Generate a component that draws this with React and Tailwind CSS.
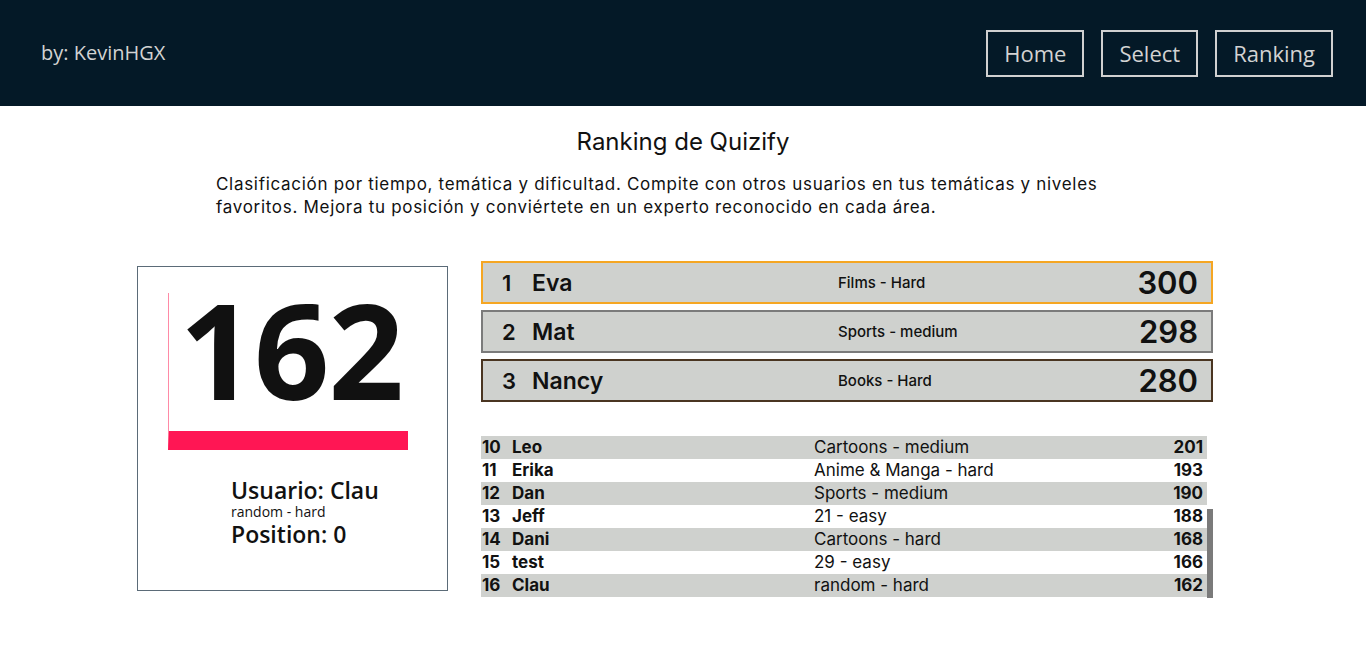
import { useEffect, useRef } from "react";

const TOP = [
  { pos: 1, name: "Eva", cat: "Films - Hard", score: 300, border: "border-[#f5a623]" },
  { pos: 2, name: "Mat", cat: "Sports - medium", score: 298, border: "border-[#7b7b7b]" },
  { pos: 3, name: "Nancy", cat: "Books - Hard", score: 280, border: "border-[#4a3521]" },
];

const REST = [
  { pos: 4, name: "Ana", cat: "Films - medium", score: 260 },
  { pos: 5, name: "Luis", cat: "Books - easy", score: 255 },
  { pos: 6, name: "Sara", cat: "Music - hard", score: 240 },
  { pos: 7, name: "Pablo", cat: "History - medium", score: 231 },
  { pos: 8, name: "Marta", cat: "Science - hard", score: 220 },
  { pos: 9, name: "Hugo", cat: "Games - easy", score: 212 },
  { pos: 10, name: "Leo", cat: "Cartoons - medium", score: 201 },
  { pos: 11, name: "Erika", cat: "Anime & Manga - hard", score: 193 },
  { pos: 12, name: "Dan", cat: "Sports - medium", score: 190 },
  { pos: 13, name: "Jeff", cat: "21 - easy", score: 188 },
  { pos: 14, name: "Dani", cat: "Cartoons - hard", score: 168 },
  { pos: 15, name: "test", cat: "29 - easy", score: 166 },
  { pos: 16, name: "Clau", cat: "random - hard", score: 162 },
];

const grotesk = "font-['Inter','Liberation_Sans',sans-serif]";
const trebuchet = "font-['Open_Sans','DejaVu_Sans',sans-serif]";

export default function App() {
  const listRef = useRef(null);

  // the list starts scrolled to the user's own row
  useEffect(() => {
    if (listRef.current) listRef.current.scrollTop = listRef.current.scrollHeight;
  }, []);

  return (
    <div className="min-h-[653px] bg-white">
      {/* Header */}
      <header className={`h-[106px] bg-[#041927] flex items-center justify-between pl-[41px] pr-[33px] ${trebuchet}`}>
        <p className="text-[20px] text-[#d3d3d3]">by: KevinHGX</p>
        <nav className="flex gap-[17px]">
          {["Home", "Select", "Ranking"].map((l) => (
            <a key={l} className="h-[47px] px-[16px] flex items-center border-2 border-[#d0d0d0] text-[22px] text-[#d3d3d3]">
              {l}
            </a>
          ))}
        </nav>
      </header>

      <main className={grotesk}>
        <h1 className="pt-[20px] text-center text-[24px] leading-[32px] text-[#111]">Ranking de Quizify</h1>
        <p className="mt-[15px] w-[934px] mx-auto text-[17px] leading-[23px] tracking-[0.7px] text-[#111]">
          Clasificación por tiempo, temática y dificultad. Compite con otros usuarios en tus temáticas y niveles
          favoritos. Mejora tu posición y conviértete en un experto reconocido en cada área.
        </p>

        <div className="mt-[42px] flex gap-[33px] pl-[137px]">
          {/* User card */}
          <div className={`mt-[5px] w-[311px] h-[325px] border border-[#5b6b78] pt-[26px] pl-[30px] ${trebuchet}`}>
            <div className="w-[240px] h-[157px] border-l border-l-[#ff8aa6] border-b-[19px] border-b-[#ff1654] flex items-start justify-end pr-[5px]">
              <span className="text-[132px] leading-[132px] font-bold text-[#111] tracking-[-1px] -mt-[10px]">162</span>
            </div>
            <div className="pl-[63px] pt-[27px] text-[#111]">
              <p className="text-[23px] leading-[26px] font-semibold">Usuario: Clau</p>
              <p className="text-[14px] leading-[18px]">random - hard</p>
              <p className="text-[23px] leading-[26px] font-semibold">Position: 0</p>
            </div>
          </div>

          {/* Ranking */}
          <div className="w-[732px]">
            <div className="flex flex-col gap-[6px]">
              {TOP.map((r) => (
                <div key={r.pos} className={`h-[43px] bg-[#cfd1ce] border-2 ${r.border} flex items-center pl-[19px] pr-[13px] text-[#111]`}>
                  <span className="w-[30px] text-[22px] leading-[28px] font-semibold">{r.pos}</span>
                  <span className="w-[306px] text-[23px] leading-[28px] font-semibold">{r.name}</span>
                  <span className="flex-1 text-[15px] leading-[20px] font-medium">{r.cat}</span>
                  <span className="text-[31px] leading-[36px] font-semibold">{r.score}</span>
                </div>
              ))}
            </div>

            <div className="mt-[32px] h-[164px] flex">
              <div ref={listRef} className="flex-1 overflow-hidden">
                {REST.map((r) => (
                  <div
                    key={r.pos}
                    className={`h-[23px] flex items-center pl-px pr-[4px] text-[17px] text-[#111] ${r.pos % 2 === 0 ? "bg-[#cfd1ce]" : "bg-white"}`}
                  >
                    <span className="w-[30px] font-bold">{r.pos}</span>
                    <span className="w-[302px] font-bold">{r.name}</span>
                    <span className="flex-1">{r.cat}</span>
                    <span className="font-bold">{r.score}</span>
                  </div>
                ))}
              </div>
              <div className="w-[6px] bg-white">
                <div className="mt-[75px] h-[89px] bg-[#7a7a7a]" />
              </div>
            </div>
          </div>
        </div>
      </main>
    </div>
  );
}
